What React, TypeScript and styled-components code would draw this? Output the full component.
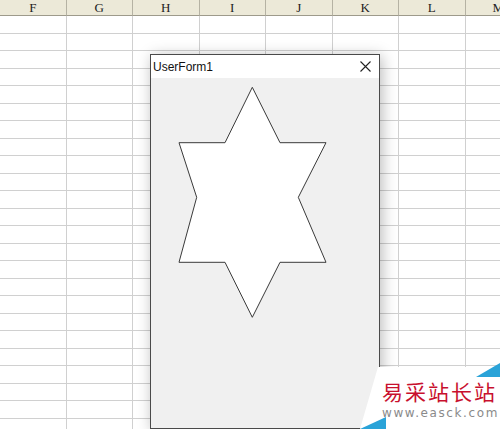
import React from "react";
import styled, { createGlobalStyle } from "styled-components";

const GlobalStyle = createGlobalStyle`
  html, body {
    margin: 0;
    padding: 0;
    background: #ffffff;
  }
`;

const Page = styled.div`
  position: relative;
  width: 500px;
  height: 429px;
  overflow: hidden;
  background: #ffffff;
`;

const Sheet = styled.div`
  display: grid;
  grid-template-columns: repeat(8, 66.5px);
  grid-template-rows: 16px;
  grid-auto-rows: 17.5px;
`;

const HeadCell = styled.div`
  background: #ece9d8;
  border-right: 1px solid #b5b2a3;
  border-bottom: 1px solid #9d9a8b;
  box-sizing: border-box;
  display: flex;
  align-items: center;
  justify-content: center;
  font-family: "Liberation Serif", "DejaVu Serif", serif;
  font-size: 13px;
  color: #222;
`;

const Cell = styled.div`
  border-right: 1px solid #d0d0d0;
  border-bottom: 1px solid #d0d0d0;
  box-sizing: border-box;
`;

const Window = styled.div`
  position: absolute;
  left: 150px;
  top: 54px;
  width: 230px;
  height: 375px;
  box-sizing: border-box;
  border: 1px solid #4a4a4a;
  background: #f0f0f0;
  box-shadow: 2px 2px 14px rgba(0, 0, 0, 0.28);
  display: flex;
  flex-direction: column;
`;

const TitleBar = styled.div`
  height: 23px;
  flex: none;
  background: #ffffff;
  display: flex;
  align-items: center;
  justify-content: space-between;
  padding: 0 8px 0 2px;
`;

const Title = styled.span`
  font-family: "Liberation Sans", Arial, sans-serif;
  font-size: 12px;
  color: #111;
`;

const Body = styled.div`
  flex: 1;
`;

const Watermark = styled.div`
  position: absolute;
  right: 0;
  bottom: 0;
  width: 140px;
  height: 62px;
`;

const WatermarkPanel = styled.div`
  position: absolute;
  inset: 0;
  background: #ffffff;
  clip-path: polygon(18px 0, 100% 0, 100% 100%, 0 100%);
`;

const BlueCorner = styled.div<{ $top?: boolean }>`
  position: absolute;
  background: #2aa3d8;
  ${(p) =>
    p.$top
      ? `right: 0; top: -4px; width: 24px; height: 14px; clip-path: polygon(100% 0, 100% 100%, 0 100%);`
      : `left: 0; bottom: 0; width: 26px; height: 12px; clip-path: polygon(100% 0, 0 100%, 100% 100%);`}
`;

const WatermarkText = styled.div`
  position: relative;
  display: flex;
  flex-direction: column;
  padding: 12px 0 0 22px;
  gap: 3px;
`;

const SiteName = styled.span`
  font-family: "Noto Sans CJK SC", sans-serif;
  font-size: 21px;
  line-height: 24px;
  letter-spacing: 2px;
  color: #c8102e;
  white-space: nowrap;
`;

const SiteUrl = styled.span`
  font-family: "DejaVu Sans", sans-serif;
  font-size: 12px;
  letter-spacing: 1.6px;
  color: #8a8a8a;
  white-space: nowrap;
`;

const columns = ["F", "G", "H", "I", "J", "K", "L", "M"];
const rowCount = 24;

const starPoints = [
  [101.3, 9.3],
  [129, 64.7],
  [175, 64.7],
  [147.3, 119.3],
  [175, 184.3],
  [129, 184.3],
  [101.3, 239.3],
  [74, 184.3],
  [28, 184.3],
  [45.7, 119.3],
  [28, 64.7],
  [74, 64.7],
]
  .map((p) => p.join(","))
  .join(" ");

const App = () => {
  return (
    <Page>
      <GlobalStyle />
      <Sheet>
        {columns.map((c) => (
          <HeadCell key={c}>{c}</HeadCell>
        ))}
        {Array.from({ length: rowCount * columns.length }).map((_, i) => (
          <Cell key={i} />
        ))}
      </Sheet>

      <Window>
        <TitleBar>
          <Title>UserForm1</Title>
          <svg width="11" height="11" viewBox="0 0 11 11">
            <path d="M0.5 0.5 L10.5 10.5 M10.5 0.5 L0.5 10.5" stroke="#222" strokeWidth="1.1" />
          </svg>
        </TitleBar>
        <Body>
          <svg width="228" height="349" viewBox="0 0 228 349">
            <polygon points={starPoints} fill="#ffffff" stroke="#3a3a3a" strokeWidth="1" />
          </svg>
        </Body>
      </Window>

      <Watermark>
        <WatermarkPanel />
        <BlueCorner $top />
        <BlueCorner />
        <WatermarkText>
          <SiteName>易采站长站</SiteName>
          <SiteUrl>www.easck.com</SiteUrl>
        </WatermarkText>
      </Watermark>
    </Page>
  );
};

export default App;
